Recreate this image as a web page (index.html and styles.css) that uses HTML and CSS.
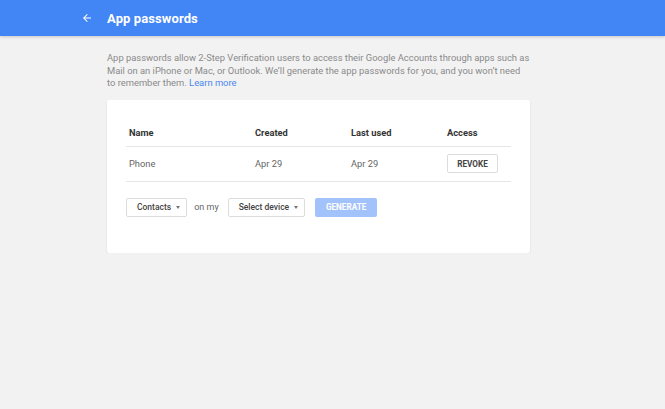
FILE: index.html
```html
<!DOCTYPE html>
<html lang="en">
<head>
<meta charset="utf-8">
<title>App passwords</title>
<link rel="stylesheet" href="styles.css">
</head>
<body>
<header class="topbar">
  <div class="topbar-inner">
    <svg class="back" width="12" height="12" viewBox="0 0 24 24" aria-hidden="true"><path d="M20 11H7.83l5.59-5.59L12 4l-8 8 8 8 1.41-1.41L7.83 13H20v-2z" fill="#fff"/></svg>
    <h1 class="title">App passwords</h1>
  </div>
</header>
<main class="content">
  <p class="intro">App passwords allow 2-Step Verification users to access their Google Accounts through apps such as Mail on an iPhone or Mac, or Outlook. We’ll generate the app passwords for you, and you won’t need to remember them. <a class="link" href="#">Learn more</a></p>
  <section class="card">
    <div class="table">
      <div class="row head">
        <span>Name</span><span>Created</span><span>Last used</span><span>Access</span>
      </div>
      <div class="row">
        <span>Phone</span><span>Apr 29</span><span>Apr 29</span><span><button class="btn revoke">REVOKE</button></span>
      </div>
    </div>
    <div class="controls">
      <button class="select">Contacts<span class="caret"></span></button>
      <span class="onmy">on my</span>
      <button class="select">Select device<span class="caret"></span></button>
      <button class="btn generate">GENERATE</button>
    </div>
  </section>
</main>
</body>
</html>
```
FILE: styles.css
```css
html, body { margin: 0; padding: 0; }
body {
  background: #f2f2f2;
  font-family: Roboto, "Liberation Sans", Arial, sans-serif;
  color: #444;
}
.topbar {
  height: 36px;
  background: #4285f4;
  box-shadow: 0 1px 3px rgba(0,0,0,0.18);
}
.topbar-inner {
  height: 36px;
  display: flex;
  align-items: center;
  padding-left: 81px;
}
.back { display: block; margin-right: 14px; }
.title {
  margin: 0;
  font-size: 13px;
  font-weight: 700;
  color: #fff;
  letter-spacing: 0.1px;
}
.content {
  width: 423px;
  margin-left: 107px;
}
.intro {
  margin: 16px 0 10px 0;
  font-size: 9.4px;
  line-height: 12.6px;
  color: #8a8a8a;
}
.link { color: #4a86f0; text-decoration: none; }
.card {
  background: #fff;
  border-radius: 2px;
  box-shadow: 0 1px 2px rgba(0,0,0,0.12);
  padding: 20px 19px 36px 19px;
}
.table { font-size: 9.3px; }
.row {
  display: grid;
  grid-template-columns: 126px 96px 96px 1fr;
  padding: 0 3px;
  align-items: center;
  border-bottom: 1px solid #e6e6e6;
}
.row.head {
  height: 26px;
  font-weight: 700;
  color: #333;
}
.row:not(.head) {
  height: 34px;
  color: #666;
}
.btn {
  font-family: inherit;
  font-weight: 700;
  font-size: 8.2px;
  border-radius: 2px;
  cursor: pointer;
}
.revoke {
  width: 51px;
  height: 19px;
  background: #fff;
  border: 1px solid #dcdcdc;
  color: #444;
  padding: 0;
}
.controls {
  display: flex;
  align-items: center;
  margin-top: 16px;
  height: 19px;
}
.select {
  height: 19px;
  box-sizing: border-box;
  background: #fff;
  border: 1px solid #dcdcdc;
  border-radius: 2px;
  font-family: inherit;
  font-weight: 500;
  font-size: 8.5px;
  color: #444;
  display: flex;
  align-items: center;
  gap: 5px;
  padding: 0 6px 0 10px;
  white-space: nowrap;
}
.caret {
  width: 0; height: 0;
  border-left: 2.5px solid transparent;
  border-right: 2.5px solid transparent;
  border-top: 3px solid #777;
}
.onmy {
  font-size: 9px;
  color: #666;
  margin: 0 9px 0 7px;
}
.generate {
  margin-left: 10px;
  width: 62px;
  height: 19px;
  background: #a1c2fa;
  color: #fff;
  border: none;
  padding: 0;
}
```
